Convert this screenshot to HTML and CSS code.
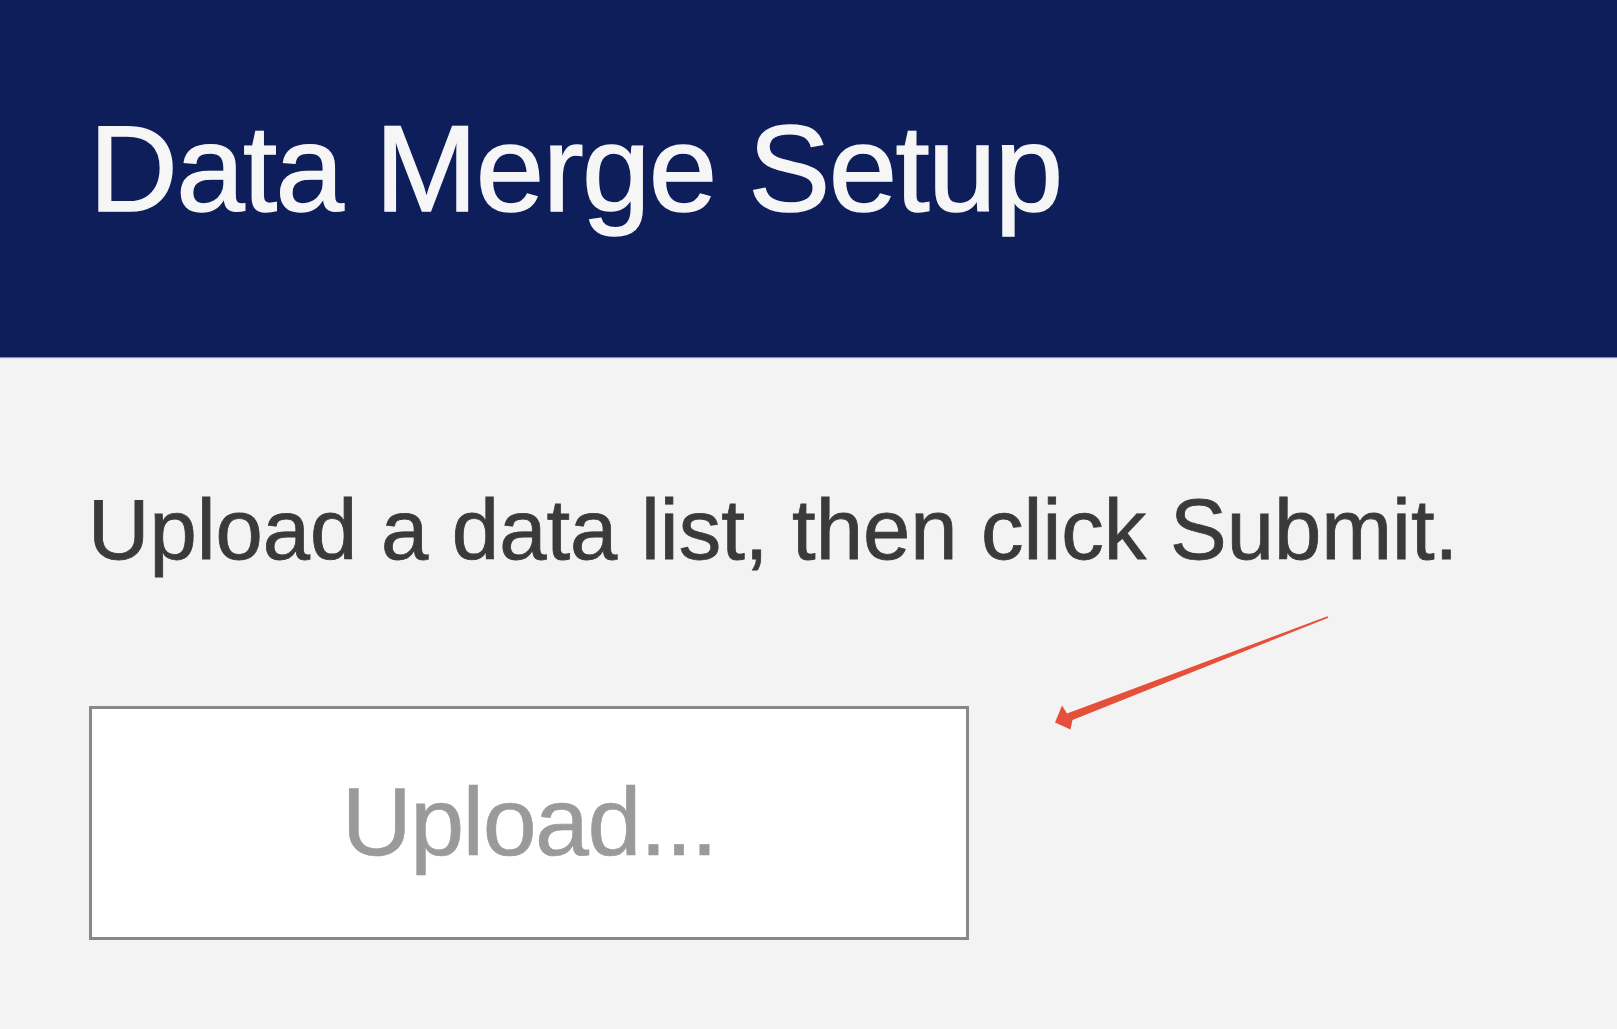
FILE: index.html
```html
<!DOCTYPE html>
<html lang="en">
<head>
<meta charset="utf-8">
<title>Data Merge Setup</title>
<link rel="stylesheet" href="styles.css">
</head>
<body>
<header class="topbar">
  <h1 class="title">Data Merge Setup</h1>
</header>
<main class="content">
  <p class="instruction">Upload a data list, then click Submit.</p>
  <button class="upload" type="button">Upload...</button>
</main>
<svg class="annotation" width="290" height="125" viewBox="1045 608 290 125" aria-hidden="true">
  <polygon fill="#e5503b" points="1327.5,616.3 1328.3,617.8 1072.5,720 1070.5,729.5 1055,722.5 1062,705.5 1067,713.5"/>
</svg>
</body>
</html>
```

FILE: styles.css
```css
html, body {
  margin: 0;
  padding: 0;
}

body {
  background: #f3f3f3;
  font-family: "Liberation Sans", Arial, sans-serif;
  min-height: 1029px;
  position: relative;
  overflow: hidden;
}

.topbar {
  box-sizing: border-box;
  height: 357px;
  background: #0e1e5a;
  padding: 107px 0 0 89px;
  box-shadow: 0 1px 1px rgba(14, 30, 90, 0.45);
}

.title {
  margin: 0;
  font-size: 123px;
  line-height: 1;
  font-weight: 400;
  letter-spacing: -1.6px;
  color: #f6f6f6;
  -webkit-text-stroke: 1.5px #f6f6f6;
}

.content {
  padding: 130px 0 0 88px;
  display: flex;
  flex-direction: column;
  align-items: flex-start;
}

.instruction {
  margin: 0;
  font-size: 85px;
  line-height: 1;
  color: #3a3a3a;
  -webkit-text-stroke: 0.8px #3a3a3a;
}

.upload {
  margin: 134px 0 0 1px;
  box-sizing: border-box;
  width: 880px;
  height: 234px;
  background: #ffffff;
  border: 3px solid #888888;
  font-family: "Liberation Sans", Arial, sans-serif;
  font-size: 97px;
  letter-spacing: -1.5px;
  line-height: 1;
  color: #9a9a9a;
  -webkit-text-stroke: 0.6px #9a9a9a;
  padding: 0 0 4px 0;
  display: flex;
  align-items: center;
  justify-content: center;
}

.annotation {
  position: absolute;
  left: 1045px;
  top: 608px;
}
```
